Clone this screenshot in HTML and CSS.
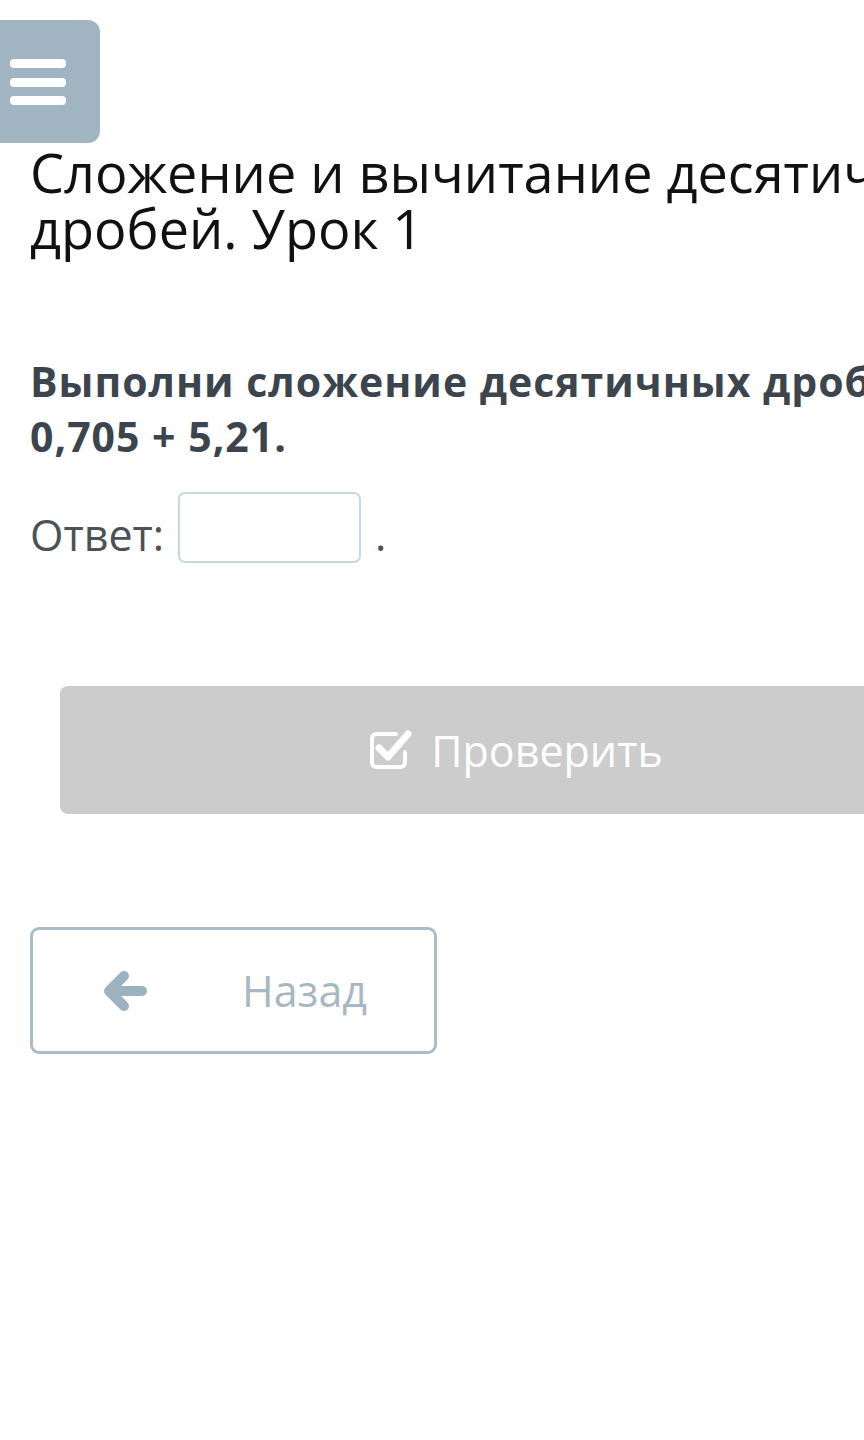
FILE: index.html
```html
<!DOCTYPE html>
<html lang="ru">
<head>
<meta charset="utf-8">
<title>Сложение и вычитание десятичных дробей</title>
<link rel="stylesheet" href="styles.css">
</head>
<body>
<div class="menu-btn">
  <svg class="menu-icon" width="56" height="46" viewBox="0 0 56 46">
    <rect x="0" y="0" width="56" height="9" rx="4"/>
    <rect x="0" y="19" width="56" height="9" rx="4"/>
    <rect x="0" y="37" width="56" height="9" rx="4"/>
  </svg>
</div>
<main class="page">
  <h1 class="title">Сложение и вычитание десятичных дробей. Урок 1</h1>
  <p class="question">Выполни сложение десятичных дробей 0,705 + 5,21.</p>
  <div class="answer-row">
    <span class="answer-label">Ответ:</span>
    <span class="answer-box"></span>
    <span class="answer-dot">.</span>
  </div>
  <div class="check-btn">
    <svg class="check-icon" width="44" height="40" viewBox="0 0 44 40">
      <path d="M27 4 H8 Q3 4 3 9 V32 Q3 37 8 37 H31 Q36 37 36 32 V22" fill="none" stroke="#fff" stroke-width="4" stroke-linecap="round"/>
      <path d="M10 18 L19 27 L39 4" fill="none" stroke="#fff" stroke-width="7" stroke-linecap="round" stroke-linejoin="round"/>
    </svg>
    <span class="check-text">Проверить</span>
  </div>
  <div class="back-btn">
    <svg class="back-icon" width="46" height="42" viewBox="0 0 46 42">
      <path d="M38 21 H8 M20 6 L5 21 L20 36" fill="none" stroke="#9db2c0" stroke-width="10" stroke-linecap="round" stroke-linejoin="round"/>
    </svg>
    <span class="back-text">Назад</span>
  </div>
</main>
</body>
</html>
```
FILE: styles.css
```css
html, body {
  margin: 0;
  padding: 0;
  background: #ffffff;
}
body {
  width: 864px;
  height: 1440px;
  overflow: hidden;
  font-family: "Open Sans", "Noto Sans", sans-serif;
}
.menu-btn {
  margin-top: 20px;
  width: 100px;
  height: 123px;
  background: #a0b4c1;
  border-radius: 0 12px 12px 0;
  display: flex;
  align-items: center;
  padding-left: 10px;
  box-sizing: border-box;
}
.menu-icon {
  fill: #ffffff;
  display: block;
}
.page {
  width: 972px;
  padding: 0 30px;
}
.title {
  margin: 1px 0 0;
  font-size: 54px;
  font-weight: 400;
  line-height: 56px;
  color: #111111;
}
.question {
  margin: 98px 0 0;
  font-size: 41px;
  letter-spacing: 1px;
  font-weight: 700;
  line-height: 55px;
  color: #3c444e;
}
.answer-row {
  margin-top: 28px;
  display: flex;
  align-items: flex-start;
  height: 71px;
}
.answer-label {
  padding-top: 7px;
  font-size: 43px;
  color: #4b5157;
  line-height: 71px;
}
.answer-box {
  margin-left: 14px;
  width: 183px;
  height: 71px;
  box-sizing: border-box;
  border: 2px solid #cad8de;
  border-radius: 7px;
}
.answer-dot {
  margin-left: 14px;
  padding-top: 7px;
  font-size: 43px;
  color: #4b5157;
  line-height: 71px;
}
.check-btn {
  margin: 123px 30px 0;
  height: 128px;
  background: #cccccc;
  border-radius: 8px;
  display: flex;
  align-items: center;
  justify-content: center;
  gap: 18px;
}
.check-icon {
  display: block;
}
.check-text {
  font-size: 43px;
  color: #ffffff;
}
.back-btn {
  margin-top: 113px;
  width: 407px;
  height: 127px;
  box-sizing: border-box;
  border: 3px solid #aabcc6;
  border-radius: 9px;
  display: flex;
  align-items: center;
  padding-left: 71px;
}
.back-icon {
  display: block;
}
.back-text {
  margin-left: 92px;
  font-size: 43px;
  color: #a7b8c2;
}
```
